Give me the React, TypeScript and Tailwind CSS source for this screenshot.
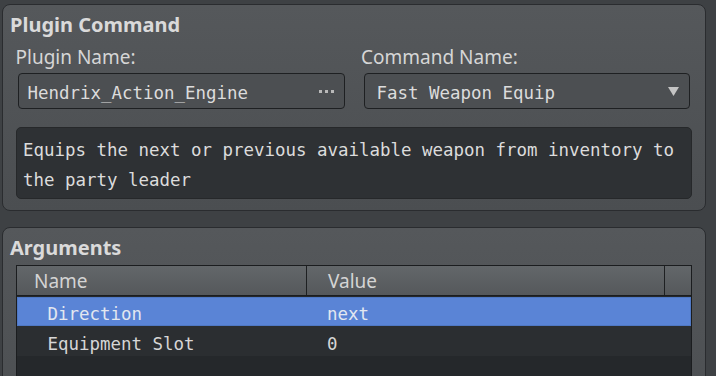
import React from "react";

const sans = { fontFamily: '"Noto Sans", "Open Sans", sans-serif' };
const mono = { fontFamily: '"DejaVu Sans Mono", "Liberation Mono", monospace' };

function Panel({ title, className, children }: { title: string; className?: string; children: React.ReactNode }) {
  return (
    <section
      className={
        "w-[704px] rounded-[8px] border border-[#2a2c2f] bg-gradient-to-b from-[#55585b] to-[#4b4e51] px-[13px] pt-[6px] " +
        (className ?? "")
      }
    >
      <h2 className="-ml-[6px] text-[20px] font-bold leading-[27px] text-[#dadada]" style={sans}>
        {title}
      </h2>
      {children}
    </section>
  );
}

export default function App() {
  return (
    <div className="h-[376px] w-[716px] overflow-hidden bg-[#3e4144] pl-[2px] pt-[4px]">
      <Panel title="Plugin Command" className="h-[207px]">
        <div className="mt-[6px] grid grid-cols-2 gap-x-[15px]">
          <div>
            <div className="-ml-[0.5px] text-[19px] leading-[26px] text-[#d6d6d6]" style={sans}>
              Plugin Name:
            </div>
            <div className="mx-[2px] mt-[3px] flex h-[36px] items-start justify-between rounded-[4px] border border-[#1e2022] bg-[#4c4f52] pl-[8.5px] pr-[10px] pt-[9px]">
              <span className="text-[17.45px] leading-[20px] text-[#dcdcdc]" style={mono}>
                Hendrix_Action_Engine
              </span>
              <span className="mt-[7px] flex gap-[3px]">
                <span className="h-[3px] w-[3px] bg-[#b9b9b9]" />
                <span className="h-[3px] w-[3px] bg-[#b9b9b9]" />
                <span className="h-[3px] w-[3px] bg-[#b9b9b9]" />
              </span>
            </div>
          </div>
          <div>
            <div className="-ml-[0.5px] text-[19px] leading-[26px] text-[#d6d6d6]" style={sans}>
              Command Name:
            </div>
            <div className="mx-[2px] mt-[3px] flex h-[36px] items-start justify-between rounded-[4px] border border-[#1e2022] bg-[#4c4f52] pl-[12px] pr-[10px] pt-[9px]">
              <span className="text-[17.45px] leading-[20px] text-[#dcdcdc]" style={mono}>
                Fast Weapon Equip
              </span>
              <svg width="11" height="9" viewBox="0 0 11 9" className="mt-[4px]">
                <polygon points="0,0 11,0 5.5,9" fill="#c4c4c4" />
              </svg>
            </div>
          </div>
        </div>
        <div className="mt-[18px] h-[72px] rounded-[5px] border border-[#26282a] bg-[#2e3134] pl-[6px] pr-[4px] pt-[7px]">
          <p className="text-[17.45px] leading-[30px] text-[#dcdcdc]" style={mono}>
            Equips the next or previous available weapon from inventory to the party leader
          </p>
        </div>
      </Panel>

      <Panel title="Arguments" className="mt-[16px] h-[200px]">
        <div className="mt-[4px] h-[120px] border border-[#1b1d1f] bg-[#25282b]">
          <div
            className="flex h-[30px] border-b border-[#1b1d1f] bg-gradient-to-b from-[#63676a] to-[#55585b] text-[19px] leading-[26px] text-[#d4d4d4]"
            style={sans}
          >
            <div className="w-[290px] border-r border-[#1e2022] pl-[17px] pt-[2px]">Name</div>
            <div className="w-[358px] border-r border-[#1e2022] pl-[21px] pt-[2px]">Value</div>
            <div className="flex-1" />
          </div>
          <div className="h-[30px] bg-[#25282b] pt-[1px]">
            <div
              className="flex h-[29px] border border-[#4f78c4] bg-[#5a84d6] pt-[6px] text-[17.45px] leading-[20px] text-[#e2e7f0]"
              style={mono}
            >
              <div className="w-[289px] pl-[29.5px]">Direction</div>
              <div className="pl-[20px]">next</div>
            </div>
          </div>
          <div
            className="flex h-[30px] bg-[#2b2e31] pt-[8px] text-[17.45px] leading-[20px] text-[#d6d6d6]"
            style={mono}
          >
            <div className="w-[290px] pl-[30.5px]">Equipment Slot</div>
            <div className="pl-[20px]">0</div>
          </div>
        </div>
      </Panel>
    </div>
  );
}
